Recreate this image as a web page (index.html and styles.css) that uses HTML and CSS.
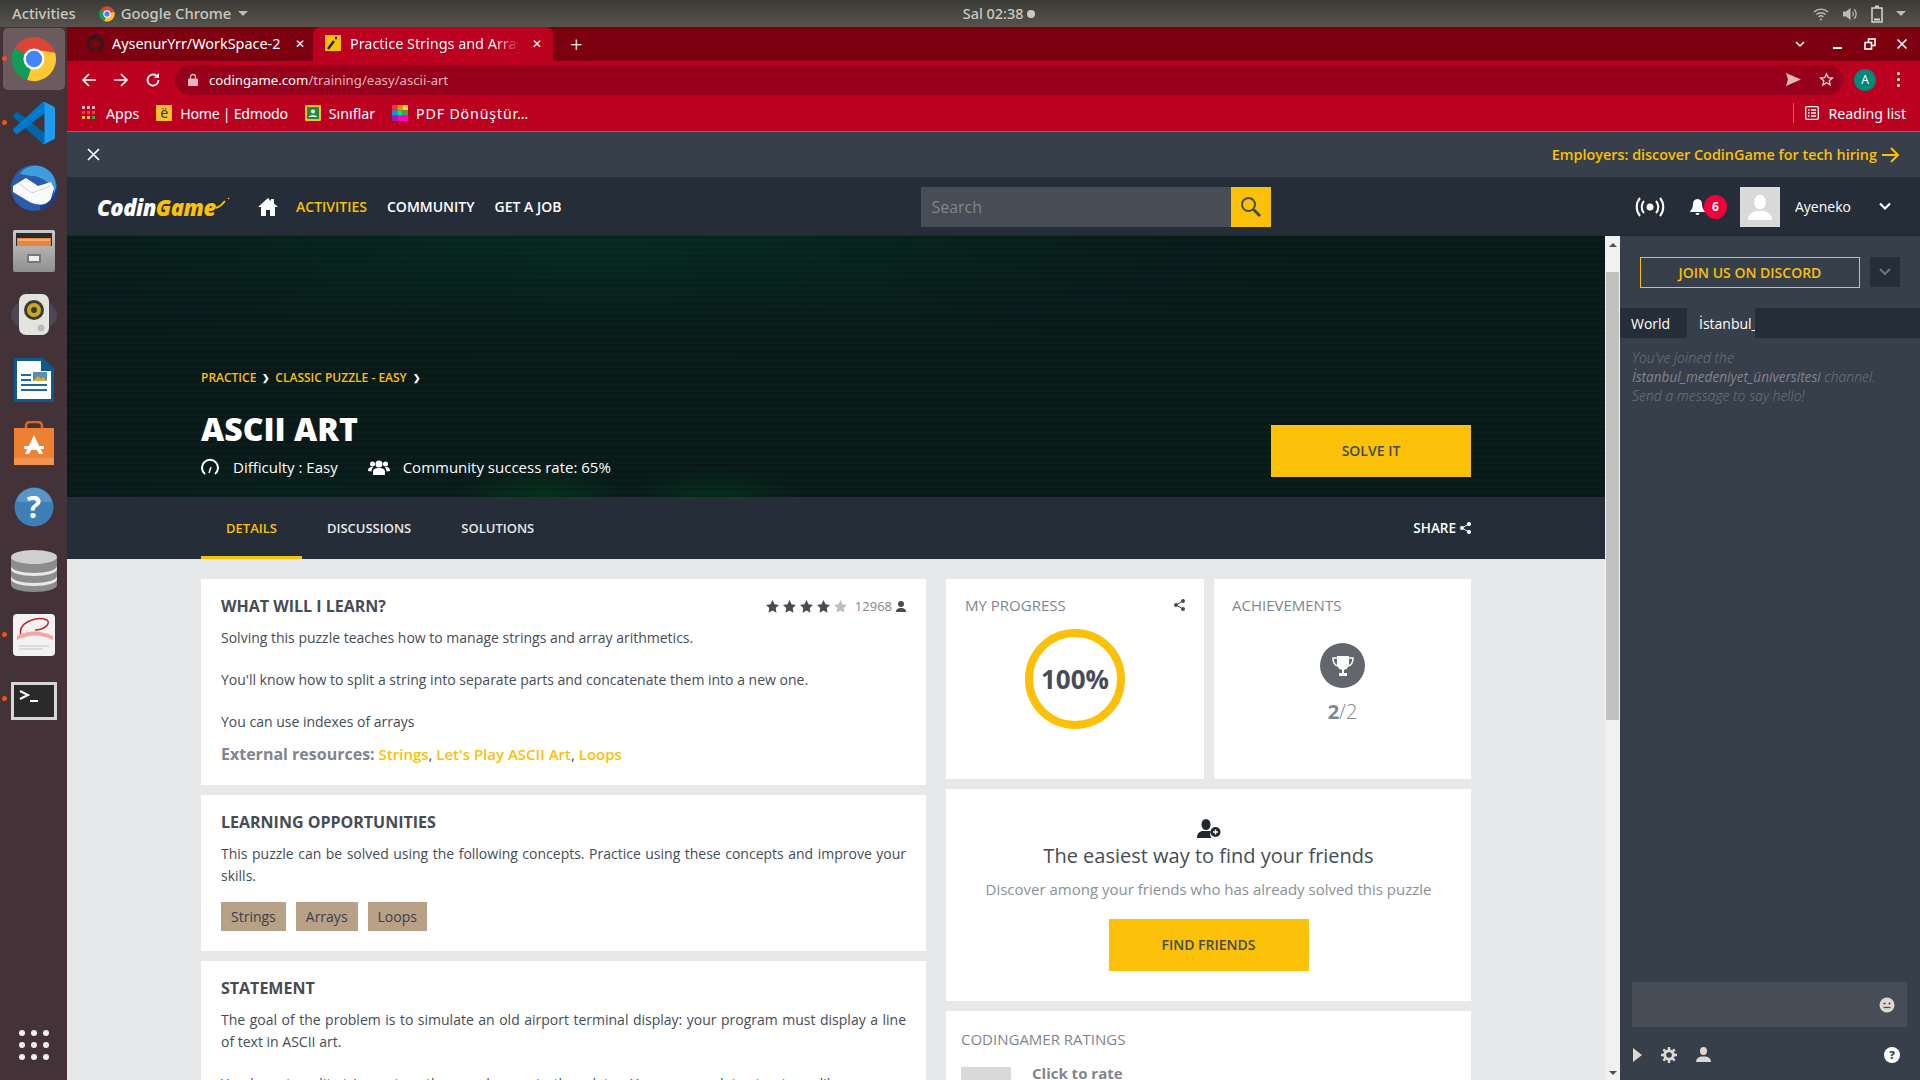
FILE: index.html
```html
<!DOCTYPE html>
<html lang="en">
<head>
    <meta charset="UTF-8">
    <meta name="viewport" content="width=device-width, initial-scale=1.0">
    <title>Practice Strings and Arrays</title>
    <link rel="stylesheet" href="styles.css">
</head>
<body>

<!-- Desktop top bar -->
<div class="topbar">
    <div class="topbar-left">
        <span class="topbar-label">Activities</span>
        <svg width="16" height="16" viewBox="0 0 48 48"><circle cx="24" cy="24" r="23" fill="#db4437"/><path d="M24 24 4 12a23 23 0 0 0 12 33z" fill="#0f9d58"/><path d="M24 24l-8 21A23 23 0 0 0 46 17z" fill="#fbc02d"/><circle cx="24" cy="24" r="11" fill="#fff"/><circle cx="24" cy="24" r="8" fill="#4285f4"/></svg>
        <span class="topbar-label">Google Chrome</span>
        <span class="caret-down"></span>
    </div>
    <div class="topbar-clock">Sal 02:38 <span class="clock-dot"></span></div>
    <div class="topbar-right">
        <svg width="16" height="16" viewBox="0 0 16 16" fill="none" stroke="#bdbdb5" stroke-width="1.4"><path d="M1 6a10 10 0 0 1 14 0M3.4 8.6a6.6 6.6 0 0 1 9.2 0M5.6 11a3.4 3.4 0 0 1 4.8 0"/><circle cx="8" cy="13.5" r="1" fill="#bdbdb5" stroke="none"/></svg>
        <svg width="16" height="16" viewBox="0 0 16 16" fill="#bdbdb5"><path d="M1 5.5h3L8.500 2v12L4 10.500H1z"/><path d="M10.500 5a4 4 0 0 1 0 6zM12.500 2.800a7 7 0 0 1 0 10.400l-.7-1a6 6 0 0 0 0-8.400z"/></svg>
        <svg width="12" height="18" viewBox="0 0 12 18" fill="none" stroke="#d6d6d0" stroke-width="1.500"><rect x="1" y="3" width="10" height="14"/><path d="M4 1.500h4" stroke-width="2"/><path d="M3 14.500h6" stroke-width="2"/></svg>
        <span class="caret-down"></span>
    </div>
</div>

<div class="desktop">
    <!-- Dock -->
    <div class="dock">
        <div class="dock-item dock-active dock-running">
            <svg width="46" height="46" viewBox="0 0 48 48"><circle cx="24" cy="24" r="23" fill="#db4437"/><path d="M24 24 4 12.500a23 23 0 0 0 13 33.500z" fill="#0f9d58"/><path d="M24 24l-7 22A23 23 0 0 0 46 17.500L24 14z" fill="#fcc934"/><circle cx="24" cy="24" r="11" fill="#fff"/><circle cx="24" cy="24" r="8.500" fill="#4285f4"/></svg>
        </div>
        <div class="dock-item dock-running">
            <svg width="42" height="42" viewBox="0 0 100 100"><path d="M96.461 89.204 75.857 99.125a6.230 6.230 0 0 1-7.107-1.207L1.326 36.400a4.167 4.167 0 0 1 .004-6.162l5.510-5.009a4.167 4.167 0 0 1 5.320-.236l81.228 61.620c2.725 2.067 6.640.124 6.640-3.297v.240a6.250 6.250 0 0 1-3.567 5.648z" fill="#0065a9"/><path d="M96.461 10.796 75.857.876a6.230 6.230 0 0 0-7.107 1.207L1.326 63.600a4.167 4.167 0 0 0 .004 6.162l5.510 5.009a4.167 4.167 0 0 0 5.320.236l81.228-61.620c2.725-2.067 6.640-.124 6.640 3.297v-.240a6.250 6.250 0 0 0-3.567-5.648z" fill="#007acc"/><path d="M75.857 99.126a6.226 6.226 0 0 1-7.107-1.208c2.306 2.306 6.250.673 6.250-2.589V4.671c0-3.262-3.944-4.895-6.250-2.589a6.226 6.226 0 0 1 7.107-1.208l20.600 9.908A6.250 6.250 0 0 1 100 16.413v67.174a6.250 6.250 0 0 1-3.543 5.630z" fill="#1f9cf0"/></svg>
        </div>
        <div class="dock-item">
            <svg width="48" height="50" viewBox="0 0 48 50"><circle cx="24" cy="26" r="23" fill="#2a5caa"/><path d="M10 12C16 2 32 0 42 12c4 6 5 14 3 20-4-10-12-18-24-18z" fill="#3f9ddf"/><path d="M3 24l13-8 12 8 13-4 3 6-4 14c-8 4-16 3-22-1L3 30z" fill="#fafafa"/><path d="M8 21l14 10 18-7" fill="none" stroke="#cfd4da" stroke-width="1"/><path d="M30 44c8-2 14-8 16-18l2 4c-2 10-8 16-18 18z" fill="#1b3f80"/></svg>
        </div>
        <div class="dock-item">
            <svg width="42" height="42" viewBox="0 0 42 42"><defs><linearGradient id="drawer" x1="0" y1="0" x2="0" y2="1"><stop offset="0" stop-color="#c8c8c8"/><stop offset="1" stop-color="#8f8f8f"/></linearGradient></defs><rect width="42" height="42" rx="2" fill="url(#drawer)"/><rect x="3" y="3" width="36" height="13" fill="#2a2a2a"/><rect x="4" y="8" width="34" height="8" fill="#e8853c"/><path d="M5 10h32" stroke="#f7d9b4"/><rect x="14" y="24" width="14" height="9" rx="1" fill="#777"/><rect x="16" y="26" width="10" height="5" fill="#eee"/></svg>
        </div>
        <div class="dock-item">
            <svg width="48" height="44" viewBox="0 0 48 44"><ellipse cx="24" cy="22" rx="23" ry="16" fill="#5b5f78" opacity=".45"/><rect x="9" y="1" width="30" height="41" rx="7" fill="#e4e4de"/><circle cx="24" cy="17" r="10" fill="#3c3a30"/><circle cx="24" cy="17" r="7" fill="#c9a91f"/><circle cx="24" cy="17" r="3" fill="#3c3a30"/><circle cx="31" cy="35" r="3.500" fill="#bbb"/></svg>
        </div>
        <div class="dock-item">
            <svg width="40" height="46" viewBox="0 0 40 46"><path d="M0 2h29l11 10v34H0z" fill="#0d5a8c"/><path d="M3 5h24v10h10v28H3z" fill="#fff"/><path d="M7 19h10M7 24h10M7 29h26M7 34h26" stroke="#1a6aa0" stroke-width="2"/><rect x="19" y="16" width="14" height="9" fill="#5a8db0"/><path d="M19 25l5-5 3 3 2-2 4 4z" fill="#d9a93a"/></svg>
        </div>
        <div class="dock-item">
            <svg width="42" height="44" viewBox="0 0 42 44"><path d="M13 8V4a4 4 0 0 1 4-3h8a4 4 0 0 1 4 3v4" fill="none" stroke="#d9662a" stroke-width="2.500"/><path d="M1 7h40v37H1z" fill="#ee8033"/><path d="M1 37h40v7H1z" fill="#f39251"/><path d="M21 14l9 19h-4l-2-4h-6l-2 4h-4z" fill="#fff"/><rect x="11" y="25" width="20" height="3" fill="#fff"/></svg>
        </div>
        <div class="dock-item">
            <svg width="40" height="40" viewBox="0 0 40 40"><circle cx="20" cy="20" r="19.500" fill="#3e7fb8"/><path d="M20 1a19 19 0 0 1 18 14H2A19 19 0 0 1 20 1z" fill="#6ba3d4" opacity=".6"/><text x="20" y="31" class="dock-help">?</text></svg>
        </div>
        <div class="dock-item">
            <svg width="46" height="44" viewBox="0 0 46 44"><path d="M0 8v28c0 4 10 7 23 7s23-3 23-7V8z" fill="#8d8d8d"/><ellipse cx="23" cy="8" rx="23" ry="7" fill="#cfcfcf"/><path d="M0 17c0 4 10 7 23 7s23-3 23-7v3c0 4-10 7-23 7S0 24 0 20zM0 27c0 4 10 7 23 7s23-3 23-7v3c0 4-10 7-23 7S0 34 0 30z" fill="#e9e9e9"/></svg>
        </div>
        <div class="dock-item dock-running">
            <svg width="42" height="42" viewBox="0 0 42 42"><rect width="42" height="42" rx="4" fill="#f2f2f2"/><path d="M8 22C4 8 24 2 34 6c4 3-2 10-12 10" fill="none" stroke="#c9252c" stroke-width="1.500"/><path d="M4 22c10-6 24-6 36 0v4C28 20 16 20 4 26z" fill="#f2a6a6"/><path d="M6 32h30M6 35h24" stroke="#c4c4c4"/></svg>
        </div>
        <div class="dock-item dock-running">
            <svg class="dock-terminal" width="46" height="38" viewBox="0 0 46 38"><rect width="46" height="38" fill="#d6d6d6"/><rect x="3" y="3" width="40" height="32" fill="#2a2a2a"/><path d="M9 9l8 4-8 4" fill="none" stroke="#fff" stroke-width="2"/><path d="M19 19h8" stroke="#fff" stroke-width="2"/></svg>
        </div>
        <div class="dock-grid">
            <span></span><span></span><span></span>
            <span></span><span></span><span></span>
            <span></span><span></span><span></span>
        </div>
    </div>

    <div class="window">
        <!-- Browser tabs -->
        <div class="tabstrip">
            <div class="tab">
                <svg width="17" height="17" viewBox="0 0 16 16" fill="#2b1a1e"><path d="M8 .2a8 8 0 0 0-2.500 15.600c.4.1.5-.2.5-.4v-1.400c-2.200.5-2.700-1-2.700-1-.4-.9-.9-1.200-.9-1.200-.7-.5.100-.5.100-.5.800.1 1.200.8 1.200.8.700 1.200 1.900.9 2.300.7.100-.5.300-.9.500-1.100-1.800-.2-3.600-.9-3.600-4 0-.9.300-1.600.8-2.100-.1-.2-.4-1 .1-2.100 0 0 .7-.2 2.200.8a7.500 7.500 0 0 1 4 0c1.500-1 2.200-.8 2.200-.8.400 1.100.2 1.900.1 2.100.5.600.8 1.300.8 2.100 0 3.100-1.900 3.700-3.700 3.900.3.300.6.700.6 1.500v2.200c0 .2.100.5.600.4A8 8 0 0 0 8 .2z"/></svg>
                <span class="tab-title">AysenurYrr/WorkSpace-2</span>
                <span class="tab-close">&#10005;</span>
            </div>
            <div class="tab tab-active">
                <svg width="16" height="16" viewBox="0 0 16 16"><rect width="16" height="16" fill="#fbc008"/><path d="M3 14 9 6M10 3l2 0" stroke="#222" stroke-width="2.500"/></svg>
                <span class="tab-title tab-fade">Practice Strings and Arrays</span>
                <span class="tab-close">&#10005;</span>
            </div>
            <span class="tab-new">+</span>
            <div class="window-buttons">
                <svg class="tab-list" width="12" height="12" viewBox="0 0 12 12" fill="none" stroke="#fff" stroke-width="1.500"><path d="M2 4l4 4 4-4"/></svg>
                <svg width="12" height="12" viewBox="0 0 12 12" fill="none" stroke="#fff" stroke-width="2"><path d="M1 10h9"/></svg>
                <svg width="12" height="12" viewBox="0 0 12 12" fill="none" stroke="#fff" stroke-width="1.600"><rect x="4.500" y="1" width="6.500" height="6.500"/><rect x="1" y="4.500" width="6.500" height="6.500" fill="#7c0010"/></svg>
                <svg width="12" height="12" viewBox="0 0 12 12" fill="none" stroke="#fff" stroke-width="1.600"><path d="M1.500 1.500l9 9M10.500 1.500l-9 9"/></svg>
            </div>
        </div>

        <!-- Address bar -->
        <div class="toolbar">
            <svg width="16" height="16" viewBox="0 0 16 16" fill="none" stroke="#fff" stroke-width="1.700"><path d="M15 8H2M8 2 2 8l6 6"/></svg>
            <svg width="16" height="16" viewBox="0 0 16 16" fill="none" stroke="#fff" stroke-width="1.700"><path d="M1 8h13M8 2l6 6-6 6"/></svg>
            <svg width="16" height="16" viewBox="0 0 16 16" fill="none" stroke="#fff" stroke-width="1.800"><path d="M13.500 8A5.500 5.500 0 1 1 11.500 3.800"/><path d="M14 1v5H9" fill="#fff" stroke="none"/></svg>
            <div class="omnibox">
                <svg width="10" height="13" viewBox="0 0 10 13"><path d="M2.500 6V4a2.500 2.500 0 0 1 5 0v2" fill="none" stroke="#e3b5bd" stroke-width="1.300"/><rect y="5.500" width="10" height="7.500" rx="1" fill="#e3b5bd"/></svg>
                <span class="url"><span class="url-host">codingame.com</span>/training/easy/ascii-art</span>
                <svg class="omni-send" width="15" height="13" viewBox="0 0 15 13" fill="#e3b5bd"><path d="M0 0l15 6.500L0 13l2-6.500z"/></svg>
                <svg class="omni-star" width="15" height="15" viewBox="0 0 24 24" fill="none" stroke="#eed0d5" stroke-width="2.200"><path d="M12 3l2.800 6 6.600.7-5 4.400 1.400 6.500L12 17.200l-5.800 3.400 1.400-6.500-5-4.400 6.600-.7z"/></svg>
            </div>
            <span class="profile">A</span>
            <span class="kebab"><i></i><i></i><i></i></span>
        </div>

        <!-- Bookmarks -->
        <div class="bookmarks">
            <div class="bookmark">
                <svg class="apps-icon" width="14" height="14" viewBox="0 0 14 14">
                    <g fill="#f1b6bc"><rect width="3" height="3"/><rect x="5" width="3" height="3"/><rect x="10" width="3" height="3"/></g>
                    <g fill="#ea4335"><rect y="5" width="3" height="3"/><rect x="5" y="5" width="3" height="3"/><rect x="10" y="5" width="3" height="3"/></g>
                    <g fill="#fbc02d"><rect y="10" width="3" height="3"/><rect x="5" y="10" width="3" height="3"/></g><rect x="10" y="10" width="3" height="3" fill="#34a853"/>
                </svg>
                <span>Apps</span>
            </div>
            <div class="bookmark">
                <span class="edmodo-icon">ë</span>
                <span class="bookmark-tight">Home | Edmodo</span>
            </div>
            <div class="bookmark">
                <svg width="16" height="16" viewBox="0 0 16 16"><rect width="16" height="16" rx="1" fill="#f9bb2d"/><rect x="2" y="2" width="12" height="12" fill="#1e8e3e"/><circle cx="8" cy="6.500" r="2" fill="#fff"/><path d="M4 12c0-2.500 8-2.500 8 0z" fill="#fff"/></svg>
                <span>Sınıflar</span>
            </div>
            <div class="bookmark">
                <svg width="16" height="16" viewBox="0 0 16 16"><rect width="5.400" height="5.400" fill="#e53935"/><rect x="5.300" width="5.400" height="5.400" fill="#fb8c00"/><rect x="10.600" width="5.400" height="5.400" fill="#fdd835"/><rect y="5.300" width="5.400" height="5.400" fill="#1e88e5"/><rect x="5.300" y="5.300" width="5.400" height="5.400" fill="#00e676"/><rect x="10.600" y="5.300" width="5.400" height="5.400" fill="#43a047"/><rect y="10.600" width="5.400" height="5.400" fill="#8e24aa"/><rect x="5.300" y="10.600" width="10.700" height="5.400" fill="#ff00cc"/></svg>
                <span class="bookmark-wide">PDF Dönüştür…</span>
            </div>
            <div class="reading-list">
                <svg width="14" height="14" viewBox="0 0 14 14" fill="none" stroke="#fff" stroke-width="1.300"><rect x=".7" y=".7" width="12.600" height="12.600" rx="1"/><path d="M3 4h1.500M6 4h5M3 7h1.500M6 7h5M3 10h1.500M6 10h5"/></svg>
                <span>Reading list</span>
            </div>
        </div>

        <!-- Employers banner -->
        <div class="banner">
            <svg width="13" height="13" viewBox="0 0 13 13" fill="none" stroke="#fff" stroke-width="1.700"><path d="M1 1l11 11M12 1 1 12"/></svg>
            <a class="banner-link">Employers: discover CodinGame for tech hiring
                <svg width="18" height="16" viewBox="0 0 18 16" fill="none" stroke="#fbc008" stroke-width="2"><path d="M0 8h16M9 1l7 7-7 7"/></svg>
            </a>
        </div>

        <!-- Site navigation -->
        <div class="nav">
            <div class="logo"><span class="logo-white">Codin</span><span class="logo-yellow">Game</span>
                <svg class="logo-spark" width="14" height="12" viewBox="0 0 14 12" fill="none" stroke="#fbc008" stroke-width="1.800"><path d="M0 11c3-1 6-3 9-7"/><circle cx="12.500" cy="1.500" r=".8" fill="#fbc008" stroke="none"/></svg>
            </div>
            <svg class="nav-home" width="20" height="18" viewBox="0 0 20 18" fill="#fff"><path d="M10 0 0 9h3v9h5v-6h4v6h5V9h3l-4-3.500V1h-3v2z"/></svg>
            <a class="nav-link nav-current">ACTIVITIES</a>
            <a class="nav-link">COMMUNITY</a>
            <a class="nav-link">GET A JOB</a>
            <div class="search">
                <div class="search-input">Search</div>
                <div class="search-button">
                    <svg width="22" height="22" viewBox="0 0 22 22" fill="none" stroke="#454c55" stroke-width="2"><circle cx="8.500" cy="8.500" r="6.500"/><path d="M13.500 13.500 20 20" stroke-width="3"/></svg>
                </div>
            </div>
            <div class="nav-right">
                <svg class="nav-live" width="30" height="20" viewBox="0 0 30 20" fill="none" stroke="#fff" stroke-width="2"><circle cx="15" cy="10" r="3.500" fill="#fff" stroke="none"/><path d="M9 4a9 9 0 0 0 0 12M21 4a9 9 0 0 1 0 12M5 1a14 14 0 0 0 0 18M25 1a14 14 0 0 1 0 18"/></svg>
                <div class="nav-bell">
                    <svg width="15" height="16" viewBox="0 0 15 16" fill="#fff"><path d="M7.500 0A5 5 0 0 0 3 5c0 5-3 7-3 8h15c0-1-3-3-3-8a5 5 0 0 0-4.500-5zM5.500 14a2 2 0 0 0 4 0z"/></svg>
                    <span class="badge">6</span>
                </div>
                <div class="avatar">
                    <svg width="24" height="26" viewBox="0 0 24 26" fill="#fff"><ellipse cx="12" cy="8" rx="6" ry="7.500"/><path d="M0 26c0-6 4-8 8-9h8c4 1 8 3 8 9z"/></svg>
                </div>
                <span class="nav-user">Ayeneko</span>
                <svg class="nav-chevron" width="12" height="9" viewBox="0 0 12 9" fill="none" stroke="#fff" stroke-width="2.200"><path d="M1 1.500l5 5 5-5"/></svg>
            </div>
        </div>

        <div class="main">
            <div class="page">
                <div class="hero">
                    <div class="hero-inner">
                        <div class="hero-text">
                            <div class="crumbs">
                                <a>PRACTICE</a><span class="crumb-sep">&#10095;</span>
                                <a>CLASSIC PUZZLE - EASY</a><span class="crumb-sep">&#10095;</span>
                            </div>
                            <h1>ASCII ART</h1>
                            <div class="hero-meta">
                                <svg width="18" height="18" viewBox="0 0 18 18" fill="none" stroke="#fff" stroke-width="2"><path d="M4 16A8 8 0 1 1 14 16"/><path d="M8 15l2-6" stroke-width="1.500"/></svg>
                                <span class="meta-difficulty">Difficulty : Easy</span>
                                <svg width="22" height="16" viewBox="0 0 22 16" fill="#fff"><circle cx="11" cy="5" r="3.500"/><circle cx="4.500" cy="5" r="2.500"/><circle cx="17.500" cy="5" r="2.500"/><path d="M5 16v-3c0-3 2-4 6-4s6 1 6 4v3zM0 12c0-3 1.500-4 4-4 .5 0 1 0 1 .5-1 1-1.500 2-1.500 4zM22 12c0-3-1.500-4-4-4-.5 0-1 0-1 .5 1 1 1.500 2 1.500 4z"/></svg>
                                <span>Community success rate: 65%</span>
                            </div>
                        </div>
                        <a class="btn-yellow btn-solve">SOLVE IT</a>
                    </div>
                </div>

                <div class="subnav">
                    <div class="subnav-inner">
                        <a class="subnav-item subnav-active">DETAILS</a>
                        <a class="subnav-item">DISCUSSIONS</a>
                        <a class="subnav-item">SOLUTIONS</a>
                        <a class="subnav-share">SHARE
                            <svg width="11" height="12" viewBox="0 0 11 12" fill="#fff"><circle cx="2" cy="6" r="2"/><circle cx="9" cy="2" r="2"/><circle cx="9" cy="10" r="2"/><path d="M2 6l7-4M2 6l7 4" stroke="#fff"/></svg>
                        </a>
                    </div>
                </div>

                <div class="content">
                    <div class="col-left">
                        <div class="card">
                            <div class="card-head">
                                <h2>WHAT WILL I LEARN?</h2>
                                <div class="rating">
                                    <svg width="82" height="13" viewBox="0 0 82 13" fill="#454c55">
                                        <path d="M6.500 0l2 4.300 4.500.6-3.300 3.200.8 4.700-4-2.300-4 2.300.8-4.700L0 4.900l4.500-.6z"/>
                                        <path transform="translate(17)" d="M6.500 0l2 4.300 4.500.6-3.300 3.200.8 4.700-4-2.300-4 2.300.8-4.700L0 4.900l4.500-.6z"/>
                                        <path transform="translate(34)" d="M6.500 0l2 4.300 4.500.6-3.300 3.200.8 4.700-4-2.300-4 2.300.8-4.700L0 4.900l4.500-.6z"/>
                                        <path transform="translate(51)" d="M6.500 0l2 4.300 4.500.6-3.300 3.200.8 4.700-4-2.300-4 2.300.8-4.700L0 4.900l4.500-.6z"/>
                                        <path transform="translate(68)" fill="#bdbfc2" d="M6.500 0l2 4.300 4.500.6-3.300 3.200.8 4.700-4-2.300-4 2.300.8-4.700L0 4.900l4.500-.6z"/>
                                    </svg>
                                    <span class="rating-count">12968</span>
                                    <svg width="10" height="11" viewBox="0 0 10 11" fill="#454c55"><circle cx="5" cy="3" r="3"/><path d="M0 11c0-3 2-4 5-4s5 1 5 4z"/></svg>
                                </div>
                            </div>
                            <p>Solving this puzzle teaches how to manage strings and array arithmetics.</p>
                            <p>You'll know how to split a string into separate parts and concatenate them into a new one.</p>
                            <p>You can use indexes of arrays</p>
                            <div class="resources"><b>External resources:</b> <a>Strings</a>, <a>Let's Play ASCII Art</a>, <a>Loops</a></div>
                        </div>
                        <div class="card">
                            <div class="card-head"><h2>LEARNING OPPORTUNITIES</h2></div>
                            <p>This puzzle can be solved using the following concepts. Practice using these concepts and improve your skills.</p>
                            <div class="tags">
                                <span class="tag">Strings</span>
                                <span class="tag">Arrays</span>
                                <span class="tag">Loops</span>
                            </div>
                        </div>
                        <div class="card">
                            <div class="card-head"><h2>STATEMENT</h2></div>
                            <p>The goal of the problem is to simulate an old airport terminal display: your program must display a line of text in ASCII art.</p>
                            <p>You have to split strings, store them and recreate them later. You can use data structures like arrays or hash tables with string keys.</p>
                        </div>
                    </div>

                    <div class="col-right">
                        <div class="card-row">
                            <div class="card card-progress">
                                <div class="small-head">
                                    <span>MY PROGRESS</span>
                                    <svg width="11" height="12" viewBox="0 0 11 12" fill="#454c55"><circle cx="2" cy="6" r="2"/><circle cx="9" cy="2" r="2"/><circle cx="9" cy="10" r="2"/><path d="M2 6l7-4M2 6l7 4" stroke="#454c55"/></svg>
                                </div>
                                <div class="progress-ring">100%</div>
                            </div>
                            <div class="card card-achieve">
                                <div class="small-head"><span>ACHIEVEMENTS</span></div>
                                <div class="trophy">
                                    <svg width="22" height="22" viewBox="0 0 22 22" fill="#fff"><path d="M5 1h12v8a6 6 0 0 1-12 0z"/><path d="M5 3H1c0 4 1 7 5 8M17 3h4c0 4-1 7-5 8" fill="none" stroke="#fff" stroke-width="1.500"/><path d="M10 14h2v4h3v3H7v-3h3z"/></svg>
                                </div>
                                <div class="achieve-count"><b>2</b>/2</div>
                            </div>
                        </div>
                        <div class="card card-friends">
                            <svg width="24" height="19" viewBox="0 0 24 19" fill="#1f2730"><ellipse cx="9" cy="5.500" rx="4.500" ry="5.500"/><path d="M0 19c0-5 3-7 6-7h6c1 0 2 .5 2 .5a6 6 0 0 0 .5 6.500z"/><circle cx="18.500" cy="13" r="5"/><path d="M16 13h5M18.500 10.500v5" stroke="#fff" stroke-width="1.400"/></svg>
                            <h3>The easiest way to find your friends</h3>
                            <div class="friends-sub">Discover among your friends who has already solved this puzzle</div>
                            <a class="btn-yellow btn-friends">FIND FRIENDS</a>
                        </div>
                        <div class="card card-ratings">
                            <div class="small-head"><span>CODINGAMER RATINGS</span></div>
                            <div class="rate-row">
                                <div class="rate-avatar"></div>
                                <b>Click to rate</b>
                            </div>
                        </div>
                    </div>
                </div>
            </div>

            <div class="scrollbar">
                <span class="arrow-up"></span>
                <div class="thumb"></div>
                <span class="arrow-down"></span>
            </div>

            <!-- Chat panel -->
            <div class="chat">
                <div class="chat-top">
                    <a class="discord">JOIN US ON DISCORD</a>
                    <div class="discord-more">
                        <svg width="12" height="8" viewBox="0 0 12 8" fill="none" stroke="#6b727c" stroke-width="2.200"><path d="M1 1l5 5 5-5"/></svg>
                    </div>
                </div>
                <div class="chat-tabs">
                    <span class="chat-tab">World</span>
                    <span class="chat-tab chat-tab-active">İstanbul_</span>
                </div>
                <div class="chat-log">You've joined the<br><b>İstanbul_medeniyet_üniversitesi</b> channel.<br>Send a message to say hello!</div>
                <div class="chat-input">
                    <svg width="16" height="16" viewBox="0 0 16 16"><circle cx="8" cy="8" r="7.500" fill="#ddd8d2"/><circle cx="5.500" cy="6.500" r="1.100" fill="#464d57"/><circle cx="10.500" cy="6.500" r="1.100" fill="#464d57"/><path d="M4.500 10.500h7" stroke="#464d57" stroke-width="1.300"/></svg>
                </div>
                <div class="chat-tools">
                    <svg width="9" height="14" viewBox="0 0 9 14" fill="#ddd8d2"><path d="M0 0l9 7-9 7z"/></svg>
                    <svg width="16" height="16" viewBox="0 0 16 16" fill="none" stroke="#ddd8d2"><circle cx="8" cy="8" r="4.300" stroke-width="3"/><path d="M8 0v3M8 13v3M0 8h3M13 8h3M2.300 2.300l2 2M11.700 11.700l2 2M13.700 2.300l-2 2M4.300 11.700l-2 2" stroke-width="2.400"/></svg>
                    <svg width="15" height="15" viewBox="0 0 15 15" fill="#ddd8d2"><ellipse cx="7.500" cy="4" rx="3.500" ry="4"/><path d="M0 15c0-3 2-5 5-5.500h5c3 .5 5 2.500 5 5.500z"/></svg>
                    <span class="chat-help">?</span>
                </div>
            </div>
        </div>
    </div>
</div>

</body>
</html>
```

FILE: styles.css
```css
* {
    box-sizing: border-box;
}

body {
    margin: 0;
    width: 1920px;
    height: 1080px;
    overflow: hidden;
    font-family: "Open Sans", sans-serif;
    font-size: 14px;
    color: #454c55;
}

p, h1, h2, h3 {
    margin: 0;
}

svg {
    flex: none;
    display: block;
}

/* Desktop top bar */
.topbar {
    height: 27px;
    background: linear-gradient(#3b3a36, #56544b);
    display: flex;
    align-items: center;
    font-family: "Noto Sans", sans-serif;
    color: #c9c9c1;
    padding: 0 14px 0 12px;
}

.topbar-left {
    display: flex;
    align-items: center;
}

.topbar-label {
    font-size: 14.800px;
    font-weight: 500;
    line-height: 25px;
}

.topbar-left svg {
    margin: 0 6px 0 23px;
}

.topbar-left .caret-down {
    margin-left: 7px;
}

.caret-down {
    width: 0;
    height: 0;
    border-left: 5px solid transparent;
    border-right: 5px solid transparent;
    border-top: 5px solid #bdbdb5;
}

.topbar-clock {
    flex: 1;
    display: flex;
    justify-content: center;
    align-items: center;
    gap: 4px;
    font-size: 14.400px;
    font-weight: 500;
    padding-right: 63px;
    line-height: 25px;
}

.clock-dot {
    width: 8px;
    height: 8px;
    border-radius: 50%;
    background: #c9c9c1;
}

.topbar-right {
    display: flex;
    align-items: center;
    gap: 13px;
}

/* Dock */
.desktop {
    display: flex;
    height: 1053px;
}

.dock {
    width: 67px;
    background: #443239;
    display: flex;
    flex-direction: column;
    align-items: center;
    gap: 2px;
    padding-top: 1px;
    padding-bottom: 20px;
}

.dock-item {
    width: 62px;
    height: 62px;
    display: flex;
    align-items: center;
    justify-content: center;
    border-radius: 5px;
    position: relative;
}

.dock-active {
    background: #6b5a5e;
}

.dock-running::before {
    content: "";
    position: absolute;
    left: -0.5px;
    top: 28px;
    width: 5px;
    height: 5px;
    border-radius: 50%;
    background: #e95420;
}

.dock-terminal {
    margin-top: 3px;
}

.dock-help {
    font-family: "Open Sans", sans-serif;
    font-size: 30px;
    font-weight: 700;
    fill: #fff;
    text-anchor: middle;
}

.dock-grid {
    margin-top: auto;
    display: grid;
    grid-template-columns: repeat(3, 6px);
    gap: 6px;
    column-gap: 6px;
}

.dock-grid span {
    width: 6px;
    height: 6px;
    border-radius: 50%;
    background: #f2f0ee;
}

/* Browser */
.window {
    width: 1853px;
    display: flex;
    flex-direction: column;
}

.tabstrip {
    height: 34px;
    background: #7c0010;
    display: flex;
    align-items: center;
    padding-left: 8px;
    font-family: "Noto Sans", sans-serif;
    font-size: 14.400px;
    color: #fff;
}

.tab {
    width: 238px;
    height: 34px;
    display: flex;
    align-items: center;
    padding-left: 12px;
    padding-bottom: 2px;
    flex: none;
}

.tab-title {
    margin-left: 8px;
    width: 178px;
    white-space: nowrap;
    overflow: hidden;
}

.tab-fade {
    margin-left: 9px;
    width: 170px;
    -webkit-mask-image: linear-gradient(90deg, #000 85%, transparent);
    mask-image: linear-gradient(90deg, #000 85%, transparent);
}

.tab-close {
    font-size: 12px;
    margin-left: 5px;
}

.tab-active {
    background: #bb0020;
    border-radius: 8px 8px 0 0;
    width: 240px;
}

.tab-active .tab-close {
    margin-left: 12px;
}

.tab-new {
    font-size: 22px;
    font-weight: 300;
    margin-left: 17px;
}

.window-buttons {
    margin-left: auto;
    display: flex;
    align-items: center;
    gap: 20px;
    padding-right: 12px;
}

.tab-list {
    margin-right: 6px;
}

.toolbar {
    height: 37px;
    background: #bb0020;
    display: flex;
    align-items: center;
    padding-left: 14px;
    gap: 16px;
    font-family: "Noto Sans", sans-serif;
}

.omnibox {
    width: 1668px;
    height: 30px;
    margin-left: -2px;
    background: #96001a;
    border-radius: 15px;
    display: flex;
    align-items: center;
    padding-left: 13px;
    color: #e3b5bd;
    font-size: 13.200px;
}

.url {
    margin-left: 11px;
}

.url-host {
    color: #fff;
}

.omni-send {
    margin-left: auto;
}

.omni-star {
    margin: 0 9px 0 18px;
}

.profile {
    width: 22px;
    height: 22px;
    border-radius: 50%;
    background: #00897b;
    color: #fff;
    font-size: 12px;
    display: flex;
    align-items: center;
    justify-content: center;
    margin-left: -5px;
}

.kebab {
    display: flex;
    flex-direction: column;
    gap: 3px;
    margin-left: 5px;
}

.kebab i {
    width: 3px;
    height: 3px;
    border-radius: 50%;
    background: #fff;
}

.bookmarks {
    height: 34px;
    background: #bb0020;
    border-bottom: 1px solid #cf4858;
    display: flex;
    align-items: center;
    padding-left: 15px;
    padding-bottom: 3px;
    gap: 17px;
    font-family: "Noto Sans", sans-serif;
    font-size: 14.200px;
    color: #fff;
}

.bookmark {
    display: flex;
    align-items: center;
    gap: 8px;
}

.bookmark-tight {
    letter-spacing: -0.3px;
}

.bookmark-wide {
    letter-spacing: 0.85px;
}

.apps-icon {
    margin-right: 2px;
}

.edmodo-icon {
    width: 16px;
    height: 16px;
    background: #fbc02d;
    color: #333;
    font-size: 14px;
    line-height: 15px;
    text-align: center;
}

.reading-list {
    margin-left: auto;
    height: 20px;
    border-left: 1px solid #d65e6d;
    padding: 0 14px 0 11px;
    display: flex;
    align-items: center;
    gap: 9px;
}

/* Banner and nav */
.banner {
    height: 45px;
    background: #373f4b;
    display: flex;
    align-items: center;
    justify-content: space-between;
    padding: 0 20px 0 20px;
}

.banner-link {
    display: flex;
    align-items: center;
    gap: 5px;
    color: #fbc008;
    font-weight: 600;
    font-size: 14.400px;
}

.nav {
    height: 59px;
    background: #252e38;
    display: flex;
    align-items: center;
    padding-left: 30px;
    padding-top: 1px;
    border-bottom: 1px solid #1f2730;
}

.logo {
    width: 133px;
    font-size: 22px;
    font-weight: 800;
    font-style: italic;
    letter-spacing: -0.5px;
    display: flex;
    position: relative;
}

.logo-white {
    color: #fff;
}

.logo-yellow {
    color: #fbc008;
}

.logo-spark {
    position: absolute;
    right: 0;
    top: 5px;
}

.nav-home {
    margin-left: 28px;
    margin-right: 18px;
}

.nav-link {
    color: #fff;
    font-weight: 600;
    font-size: 14px;
    margin-right: 20px;
}

.nav-current {
    color: #fbc008;
}

.search {
    margin-left: 340px;
    display: flex;
    width: 350px;
    height: 40px;
}

.search-input {
    flex: 1;
    background: #464d57;
    color: #7f858e;
    font-size: 16px;
    line-height: 40px;
    padding-left: 10px;
}

.search-button {
    width: 40px;
    background: #fbc008;
    display: flex;
    align-items: center;
    justify-content: center;
}

.nav-right {
    margin-left: auto;
    display: flex;
    align-items: center;
    color: #fff;
    padding-right: 29px;
}

.nav-bell {
    display: flex;
    align-items: center;
    margin-left: 25px;
}

.badge {
    width: 23px;
    height: 24px;
    border-radius: 50%;
    background: #f2003c;
    color: #fff;
    font-size: 12px;
    font-weight: 700;
    line-height: 24px;
    text-align: center;
    margin-left: -1px;
}

.avatar {
    width: 40px;
    height: 40px;
    margin-left: 13px;
    background: #d9d9d9;
    display: flex;
    align-items: flex-end;
    justify-content: center;
    padding-bottom: 7px;
}

.nav-user {
    margin-left: 15px;
    font-size: 14px;
    width: 84px;
}

/* Main area */
.main {
    flex: 1;
    display: flex;
    min-height: 0;
}

.page {
    width: 1538px;
    height: 844px;
    overflow: hidden;
    background: #e7e8ea;
}

.hero {
    height: 261px;
    background-color: #0a1c1b;
    background-image:
        repeating-linear-gradient(0deg, rgba(0, 0, 0, 0.12) 0 3px, rgba(0, 0, 0, 0) 3px 6px),
        radial-gradient(ellipse 90px 30px at 31% 100%, rgba(0, 70, 35, 0.6), transparent),
        radial-gradient(ellipse 90px 30px at 42% 100%, rgba(0, 70, 35, 0.5), transparent),
        radial-gradient(ellipse 700px 120px at 35% 0, rgba(0, 65, 45, 0.45), transparent),
        radial-gradient(ellipse 300px 40px at 15% 100%, rgba(0, 60, 40, 0.25), transparent);
}

.hero-inner {
    width: 1270px;
    height: 100%;
    margin: 0 auto;
    padding-top: 133px;
    padding-bottom: 20px;
    display: flex;
    justify-content: space-between;
    align-items: flex-end;
    color: #fff;
}

.hero-text {
    height: 108px;
}

.crumbs {
    display: flex;
    align-items: center;
    font-size: 12px;
    font-weight: 600;
    color: #fbc008;
    height: 16px;
}

.crumb-sep {
    color: #fff;
    font-size: 9px;
    margin: 0 5px 0 6px;
}

h1 {
    font-size: 32px;
    font-weight: 800;
    line-height: 44px;
    margin-top: 22px;
}

.hero-meta {
    display: flex;
    align-items: center;
    height: 18px;
    margin-top: 7px;
    font-size: 15px;
}

.meta-difficulty {
    margin: 0 30px 0 14px;
}

.hero-meta svg + span + svg {
    margin-right: 13px;
}

.btn-yellow {
    background: #fbc008;
    color: #454c55;
    font-weight: 600;
    font-size: 14px;
    display: flex;
    align-items: center;
    justify-content: center;
    width: 200px;
    height: 52px;
    padding-bottom: 1px;
}

.subnav {
    height: 62px;
    background: #252e38;
}

.subnav-inner {
    width: 1270px;
    margin: 0 auto;
    height: 100%;
    display: flex;
    align-items: stretch;
}

.subnav-item {
    padding: 0 25px;
    color: #e7e8ea;
    font-weight: 600;
    font-size: 13px;
    line-height: 62px;
}

.subnav-active {
    color: #fbc008;
    border-bottom: 3px solid #fbc008;
}

.subnav-share {
    margin-left: auto;
    color: #fff;
    font-weight: 600;
    font-size: 13.500px;
    display: flex;
    align-items: center;
    gap: 4px;
}

.content {
    width: 1270px;
    margin: 20px auto 0;
    display: flex;
    gap: 20px;
    align-items: flex-start;
}

.col-left {
    width: 725px;
    display: flex;
    flex-direction: column;
    gap: 10px;
}

.col-right {
    width: 525px;
    display: flex;
    flex-direction: column;
    gap: 10px;
}

.card {
    background: #fff;
    padding: 15px 20px 0;
    line-height: 22px;
}

.col-left .card {
    padding-bottom: 20px;
}

.card p {
    margin-top: 20px;
    text-align: justify;
}

.card-head + p {
    margin-top: 9px;
}

.card-head {
    display: flex;
    justify-content: space-between;
    align-items: center;
    height: 24px;
}

h2 {
    font-size: 16px;
    font-weight: 700;
    line-height: 24px;
}

.rating {
    display: flex;
    align-items: center;
}

.rating-count {
    margin: 0 4px 0 7px;
    font-size: 13px;
    color: #7f858e;
}

.resources {
    margin-top: 10px;
    font-size: 15px;
}

.resources b {
    font-size: 16px;
    font-weight: 700;
    color: #7f858e;
}

.resources a {
    color: #fbc008;
    font-weight: 600;
}

.tags {
    display: flex;
    gap: 10px;
    margin-top: 15px;
}

.tag {
    background: #b9a188;
    color: #3b3f47;
    height: 29px;
    line-height: 29px;
    padding: 0 10px;
}

.card-row {
    display: flex;
    gap: 10px;
}

.small-head {
    display: flex;
    justify-content: space-between;
    align-items: center;
    color: #7f858e;
    font-size: 15px;
    height: 24px;
    padding-bottom: 2px;
}

.card-progress {
    width: 258px;
    height: 200px;
    padding: 15px 19px 0;
}

.progress-ring {
    width: 100px;
    height: 100px;
    border: 8px solid #fbc008;
    border-radius: 50%;
    margin: 11px auto 0;
    display: flex;
    align-items: center;
    justify-content: center;
    font-size: 26px;
    font-weight: 700;
}

.card-achieve {
    width: 257px;
    height: 200px;
    padding: 15px 18px 0;
}

.trophy {
    width: 45px;
    height: 45px;
    border-radius: 50%;
    background: #63676d;
    margin: 25px auto 0;
    display: flex;
    align-items: center;
    justify-content: center;
}

.achieve-count {
    text-align: center;
    font-size: 20px;
    font-weight: 300;
    color: #7f858e;
    margin-top: 13px;
}

.achieve-count b {
    font-weight: 700;
}

.card-friends {
    height: 212px;
    padding-top: 30px;
    display: flex;
    flex-direction: column;
    align-items: center;
}

.card-friends h3 {
    font-size: 20px;
    font-weight: 400;
    line-height: 28px;
    margin-top: 4px;
}

.friends-sub {
    margin-top: 8px;
    color: #8a9099;
    font-size: 15px;
    line-height: 22px;
}

.btn-friends {
    margin-top: 19px;
}

.card-ratings {
    padding: 17px 15px 0;
    height: 120px;
}

.rate-row {
    display: flex;
    gap: 21px;
    margin-top: 10px;
    font-size: 15px;
    color: #7f858e;
}

.rate-row b {
    font-weight: 700;
}

.rate-avatar {
    width: 50px;
    height: 50px;
    background: #d9d9d9;
    margin-top: 5px;
}

.scrollbar {
    width: 15px;
    height: 844px;
    background: #f1f1f1;
    display: flex;
    flex-direction: column;
    align-items: center;
    padding: 7px 0 5px;
}

.arrow-up, .arrow-down {
    width: 0;
    height: 0;
    border-left: 4px solid transparent;
    border-right: 4px solid transparent;
}

.arrow-up {
    border-bottom: 4px solid #505050;
}

.arrow-down {
    border-top: 4px solid #505050;
    margin-top: auto;
}

.thumb {
    width: 13px;
    height: 448px;
    background: #c1c1c1;
    margin-top: 25px;
}

/* Chat */
.chat {
    width: 300px;
    height: 844px;
    background: #373f4b;
    display: flex;
    flex-direction: column;
    color: #fff;
}

.chat-top {
    display: flex;
    gap: 10px;
    padding: 21px 20px 0;
}

.discord {
    width: 220px;
    height: 31px;
    border: 1px solid #fbc008;
    color: #fbc008;
    font-weight: 600;
    font-size: 14px;
    line-height: 29px;
    text-align: center;
}

.discord-more {
    width: 30px;
    height: 30px;
    background: #252e38;
    display: flex;
    align-items: center;
    justify-content: center;
}

.chat-tabs {
    height: 30px;
    margin-top: 20px;
    background: #252e38;
    display: flex;
    padding-left: 1px;
    font-size: 14px;
    line-height: 31px;
}

.chat-tab {
    width: 66px;
    padding-left: 10px;
}

.chat-tab-active {
    width: 68px;
    padding-left: 12px;
    background: #373f4b;
    overflow: hidden;
    white-space: nowrap;
}

.chat-log {
    padding: 10px 12px 0;
    font-size: 14px;
    font-style: italic;
    font-weight: 300;
    line-height: 19px;
    color: #6f7681;
    white-space: nowrap;
}

.chat-log b {
    font-size: 13.600px;
    font-weight: 400;
    color: #7f858e;
}

.chat-input {
    width: 275px;
    height: 45px;
    margin: auto 0 0 12px;
    background: #464d57;
    display: flex;
    align-items: center;
    justify-content: flex-end;
    padding-right: 12px;
}

.chat-tools {
    height: 53px;
    display: flex;
    align-items: center;
    padding-left: 13px;
    padding-top: 2px;
    gap: 19px;
}

.chat-help {
    margin-left: auto;
    margin-right: 20px;
    width: 16px;
    height: 16px;
    border-radius: 50%;
    background: #fff;
    color: #373f4b;
    font-size: 11px;
    font-weight: 800;
    line-height: 16px;
    text-align: center;
}
```
